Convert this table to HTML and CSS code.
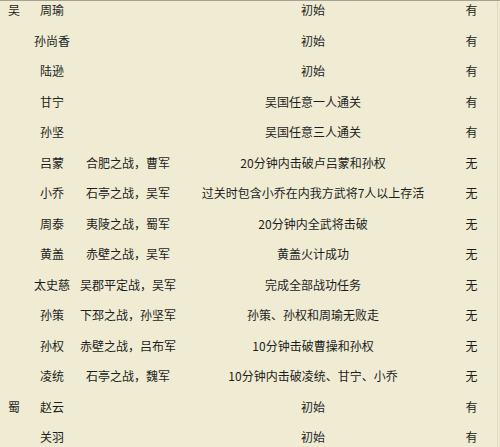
FILE: index.html
```html
<!DOCTYPE html>
<html lang="zh">
<head>
<meta charset="utf-8">
<link rel="stylesheet" href="styles.css">
</head>
<body>
<div class="frame">
  <div class="table">
    <div class="c k">吴</div><div class="c n">周瑜</div><div class="c b"></div><div class="c d">初始</div><div class="c y">有</div>
    <div class="c k"></div><div class="c n">孙尚香</div><div class="c b"></div><div class="c d">初始</div><div class="c y">有</div>
    <div class="c k"></div><div class="c n">陆逊</div><div class="c b"></div><div class="c d">初始</div><div class="c y">有</div>
    <div class="c k"></div><div class="c n">甘宁</div><div class="c b"></div><div class="c d">吴国任意一人通关</div><div class="c y">有</div>
    <div class="c k"></div><div class="c n">孙坚</div><div class="c b"></div><div class="c d">吴国任意三人通关</div><div class="c y">有</div>
    <div class="c k"></div><div class="c n">吕蒙</div><div class="c b">合肥之战，曹军</div><div class="c d">20分钟内击破卢吕蒙和孙权</div><div class="c y">无</div>
    <div class="c k"></div><div class="c n">小乔</div><div class="c b">石亭之战，吴军</div><div class="c d">过关时包含小乔在内我方武将7人以上存活</div><div class="c y">无</div>
    <div class="c k"></div><div class="c n">周泰</div><div class="c b">夷陵之战，蜀军</div><div class="c d">20分钟内全武将击破</div><div class="c y">无</div>
    <div class="c k"></div><div class="c n">黄盖</div><div class="c b">赤壁之战，吴军</div><div class="c d">黄盖火计成功</div><div class="c y">无</div>
    <div class="c k"></div><div class="c n">太史慈</div><div class="c b">吴郡平定战，吴军</div><div class="c d">完成全部战功任务</div><div class="c y">无</div>
    <div class="c k"></div><div class="c n">孙策</div><div class="c b">下邳之战，孙坚军</div><div class="c d">孙策、孙权和周瑜无败走</div><div class="c y">无</div>
    <div class="c k"></div><div class="c n">孙权</div><div class="c b">赤壁之战，吕布军</div><div class="c d">10分钟击破曹操和孙权</div><div class="c y">无</div>
    <div class="c k"></div><div class="c n">凌统</div><div class="c b">石亭之战，魏军</div><div class="c d">10分钟内击破凌统、甘宁、小乔</div><div class="c y">无</div>
    <div class="c k">蜀</div><div class="c n">赵云</div><div class="c b"></div><div class="c d">初始</div><div class="c y">有</div>
    <div class="c k"></div><div class="c n">关羽</div><div class="c b"></div><div class="c d">初始</div><div class="c y">有</div>
  </div>
</div>
</body>
</html>
```

FILE: styles.css
```css
html, body {
  margin: 0;
  padding: 0;
  background: #efecd3;
}
.frame {
  width: 500px;
  height: 446px;
  border-top: 1px solid #a3a294;
  overflow: hidden;
  box-sizing: content-box;
}
.table {
  margin-top: -6px;
  width: 497px;
  border-right: 1px solid #dcd9c0;
  display: grid;
  grid-template-columns: 28px 48px 104px 266px 51px;
  grid-auto-rows: 30.5px;
  font-family: "Noto Sans CJK SC", "Noto Sans", sans-serif;
  font-size: 12px;
  color: #1e1e1e;
}
.c {
  display: flex;
  align-items: center;
  justify-content: center;
  white-space: nowrap;
  line-height: 1;
}
```
